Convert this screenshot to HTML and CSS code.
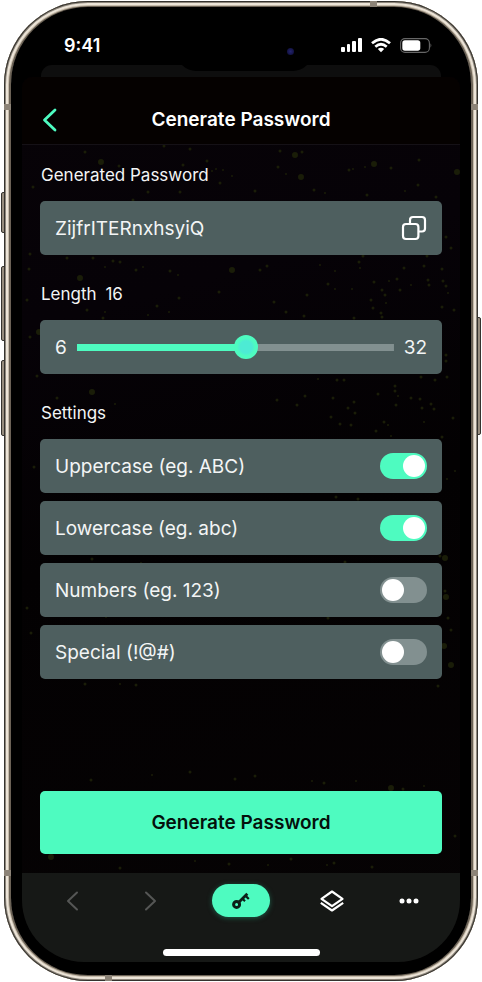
FILE: index.html
```html
<!DOCTYPE html>
<html lang="en">
<head>
<meta charset="utf-8">
<meta name="viewport" content="width=device-width, initial-scale=1">
<title>Generate Password</title>
<link rel="stylesheet" href="styles.css">
</head>
<body>
<div class="phone">
  <i class="key key-action"></i><i class="key key-up"></i><i class="key key-down"></i><i class="key key-power"></i>
  <i class="band band-tl"></i><i class="band band-tr"></i><i class="band band-bl"></i><i class="band band-br"></i><i class="band band-top"></i><i class="band band-bottom"></i>
  <div class="bezel">
    <div class="island"><i class="camera"></i></div>
    <div class="status">
      <span class="time">9:41</span>
      <span class="indicators">
        <svg width="21" height="15" viewBox="0 0 21 15" fill="#fff"><rect x="0" y="9" width="4" height="5" rx="1"/><rect x="6" y="6" width="3" height="8" rx="1"/><rect x="11" y="3" width="4" height="11" rx="1"/><rect x="17" y="0" width="4" height="14" rx="1"/></svg>
        <svg width="20" height="15" viewBox="0 0 20 15" fill="none" stroke="#fff" stroke-width="2.7"><path d="M1 5.3Q10-2.8 19 5.3M4.3 8.7Q10 3.8 15.7 8.7"/><path d="M6.8 11Q10 8.5 13.2 11L10 14.3Z" fill="#fff" stroke="none"/></svg>
        <svg width="32" height="15" viewBox="0 0 32 15"><rect x=".6" y=".6" width="28.8" height="13.8" rx="4.4" fill="none" stroke="#666" stroke-width="1.1"/><rect x="2.3" y="2.3" width="18" height="10.4" rx="2.6" fill="#fff"/><path d="M30.5 5.3q1.6 2.2 0 4.4z" fill="#666"/></svg>
      </span>
    </div>
    <div class="sheet-behind"></div>
    <div class="screen">
      <svg class="specks" width="438" height="885" viewBox="22 77 438 885" fill="none" stroke="#1a1d08" stroke-linecap="round" aria-hidden="true">
        <path stroke-width="6" d="M101 162h0M80 278h0M232 270h0M295 155h0M301 177h0M374 164h0M457 172h0M39 332h0M92 392h0M445 558h0M446 597h0M444 646h0M451 665h0M51 857h0M391 788h0"/>
        <path stroke-width="3" d="M164 146h0M190 149h0M85 152h0M33 187h0M148 192h0M180 192h0M133 200h0M183 165h0M119 166h0M207 161h0M220 183h0M30 254h0M67 258h0M93 258h0M113 261h0M120 262h0M29 269h0M136 270h0M170 271h0M219 292h0M179 298h0M157 306h0M27 300h0M87 310h0M103 318h0M30 337h0M37 376h0M57 398h0M34 467h0M27 608h0M92 559h0M31 633h0M85 684h0M136 685h0M91 780h0M190 772h0M235 779h0M120 868h0M229 864h0M280 151h0M302 152h0M278 167h0M349 170h0M391 168h0M419 160h0M314 190h0M255 191h0M418 185h0M367 195h0M436 197h0M446 237h0M451 248h0M359 262h0M363 256h0M427 256h0M267 266h0M260 270h0M404 268h0M424 266h0M442 269h0M328 284h0M307 295h0M374 282h0M397 279h0M428 280h0M429 285h0M443 281h0M446 286h0M400 290h0M382 290h0M385 295h0M371 300h0M274 302h0M286 312h0M304 316h0M373 308h0M381 313h0M382 317h0M442 307h0M454 310h0M354 318h0M446 355h0M446 361h0M421 377h0M435 380h0M447 377h0M337 380h0M344 380h0M395 386h0M395 391h0M277 400h0M297 405h0M305 396h0M333 398h0M354 402h0M348 408h0M378 394h0M396 405h0M411 398h0M420 399h0M431 404h0M434 409h0M422 408h0M331 417h0M340 424h0M355 413h0M351 425h0M384 422h0M376 431h0M453 418h0M442 437h0M336 497h0M358 499h0M345 562h0M440 556h0M445 591h0M448 618h0M451 630h0M328 618h0M438 686h0M255 776h0M324 783h0M403 789h0M455 836h0M291 859h0M334 863h0M372 867h0"/>
        <path stroke-width="2" d="M212 171h0M216 169h0M223 170h0M232 176h0M105 267h0M143 267h0M178 275h0M105 312h0M148 315h0M169 312h0M115 404h0M141 563h0M106 617h0M191 580h0M120 684h0M152 775h0M195 861h0M365 167h0M286 174h0M325 193h0M353 169h0M405 191h0M335 271h0M320 265h0M360 268h0M389 281h0M411 285h0M352 289h0M335 289h0M448 293h0M386 303h0M318 379h0M398 396h0M388 425h0M391 436h0M424 422h0M447 479h0M455 471h0M432 579h0M312 781h0M356 781h0M424 786h0M268 865h0M327 865h0"/>
      </svg>
      <header class="topbar">
        <button class="back" type="button" aria-label="Back"><svg width="16" height="26" viewBox="0 0 16 26" fill="none" stroke="#4efbc0" stroke-width="2.8" stroke-linecap="round" stroke-linejoin="round"><path d="M14 3 3.500 13 14 23"/></svg></button>
        <h1>Cenerate Password</h1>
      </header>
      <main>
        <section>
          <h2>Generated Password</h2>
          <div class="card"><output>ZijfrITERnxhsyiQ</output>
            <button class="copy" type="button" aria-label="Copy"><svg width="26" height="26" viewBox="0 0 26 26" fill="none" stroke="#fff" stroke-width="2.2"><rect x="2" y="9" width="15.4" height="15" rx="3"/><path d="M9 9V5q0-3 3-3h9q3 0 3 3v8.500q0 3-3 3h-3.600"/></svg></button>
          </div>
        </section>
        <section>
          <h2><label for="length">Length</label> <span class="amount">16</span></h2>
          <div class="card range"><span>6</span><input id="length" type="range" min="6" max="32" value="20"><span>32</span></div>
        </section>
        <section>
          <h2>Settings</h2>
          <div class="options">
            <label class="card">Uppercase (eg. ABC)<input type="checkbox" checked></label>
            <label class="card">Lowercase (eg. abc)<input type="checkbox" checked></label>
            <label class="card">Numbers (eg. 123)<input type="checkbox"></label>
            <label class="card">Special (!@#)<input type="checkbox"></label>
          </div>
        </section>
        <button class="generate" type="button">Generate Password</button>
      </main>
      <nav>
        <div class="tabs">
          <button type="button" aria-label="Previous" disabled><svg width="30" height="24" viewBox="0 0 30 24" fill="none" stroke="#555655" stroke-width="2" stroke-linecap="round" stroke-linejoin="round"><path d="M19 3.500l-9 8.500 9 8.500"/></svg></button>
          <button type="button" aria-label="Next" disabled><svg width="30" height="24" viewBox="0 0 30 24" fill="none" stroke="#555655" stroke-width="2" stroke-linecap="round" stroke-linejoin="round"><path d="M11 3.500l9 8.500-9 8.500"/></svg></button>
          <button class="current" type="button" aria-label="Passwords"><svg width="20" height="20" viewBox="0 0 20 20" fill="none" stroke="#0c2019"><circle cx="5.600" cy="13.400" r="3" stroke-width="3"/><path d="M7.800 11.300 16.300 2.800" stroke-width="2.800"/><path d="M11.600 7.800l2.400 2.400M14.400 4.600l3.400 3.400" stroke-width="2.200"/></svg></button>
          <button type="button" aria-label="Layers"><svg width="26" height="24" viewBox="0 0 26 24" fill="none" stroke="#fff" stroke-width="2.200" stroke-linejoin="round"><path d="M13 2.500 23.500 9.800 13 17.200 2.500 9.800Z"/><path d="M1.800 13.800 13 21.500 24.200 13.800"/></svg></button>
          <button type="button" aria-label="More"><svg width="20" height="6" viewBox="0 0 20 6" fill="#fff"><circle cx="3" cy="3" r="2.500"/><circle cx="10" cy="3" r="2.500"/><circle cx="17" cy="3" r="2.500"/></svg></button>
        </div>
        <div class="home"></div>
      </nav>
    </div>
  </div>
</div>
</body>
</html>
```
FILE: styles.css
```css
* { box-sizing: border-box; }
html { background: #fff; }
body {
  margin: 0;
  padding: 1px 4px;
  min-height: 100vh;
  display: flex;
  font-family: Inter, "Liberation Sans", sans-serif;
  color: #f3f5f5;
}
button { padding: 0; border: 0; background: none; font: inherit; display: flex; align-items: center; justify-content: center; }
svg { display: block; }
h1, h2 { margin: 0; }

.phone {
  position: relative;
  flex: 1;
  display: flex;
  padding: 6px 7px;
  border-radius: 84px;
  background: #b9afa1;
  box-shadow: inset 0 0 0 1px #35332f, inset 0 0 0 2px #8d867b, inset 0 0 0 4px #ece4d8, inset 0 0 0 5px #c5baa9, inset 0 0 0 7px #6b6256;
}
.bezel {
  position: relative;
  flex: 1;
  display: flex;
  flex-direction: column;
  padding: 0 11px 13px;
  border-radius: 77px;
  background: #000;
}
.key { position: absolute; z-index: -1; width: 5px; background: #978d7f; border: 1px solid #35332f; border-radius: 2px; }
.key-action { left: -3px; top: 191px; height: 41px; }
.key-up { left: -3px; top: 265px; height: 75px; }
.key-down { left: -3px; top: 359px; height: 76px; }
.key-power { right: -3px; top: 316px; height: 118px; }
.band { position: absolute; width: 7px; height: 6px; background: #8c8377; }
.band-tl { left: 0; top: 103px; }
.band-tr { right: 0; top: 103px; }
.band-bl { left: 0; bottom: 105px; }
.band-br { right: 0; bottom: 105px; }
.band-top { right: 101px; top: 0; }
.band-bottom { left: 101px; bottom: 0; }

.island { position: absolute; z-index: 1; left: 166px; right: 159px; top: 26px; height: 38px; border-radius: 19px; background: #000; }
.camera { position: absolute; right: 18px; top: 15px; width: 7px; height: 7px; border-radius: 50%; background: radial-gradient(#24246e, #0b0b30); }

.status { height: 58px; padding: 18px 28px 0 42px; display: flex; align-items: center; justify-content: space-between; }
.time { font-size: 18px; font-weight: 600; color: #fff; }
.indicators { display: flex; gap: 9px; align-items: center; }
.sheet-behind { height: 12px; margin: 0 19px; border-radius: 11px 11px 0 0; background: #0e0e0e; }

.screen {
  position: relative;
  flex: 1;
  display: flex;
  flex-direction: column;
  overflow: hidden;
  border-radius: 10px 10px 62px 62px;
  background: linear-gradient(165deg, #070307, #060207 25%, #030102 50%, #060304);
}
.specks { position: absolute; left: 0; top: 0; }
.topbar { position: relative; height: 68px; padding: 18px 19px 0; display: grid; grid-template-columns: 16px 1fr 16px; align-items: center; background: #050100; border-bottom: 1px solid #151116; }
h1 { text-align: center; font-size: 19px; font-weight: 600; color: #fff; }

main { position: relative; flex: 1; display: flex; flex-direction: column; gap: 27px; padding: 18px 18px 19px; }
h2 { margin-bottom: 14px; padding-left: 1px; font-size: 17px; line-height: 24px; font-weight: 400; }
.amount { margin-left: 4px; }
.card { height: 54px; padding: 0 15px; display: flex; align-items: center; justify-content: space-between; border-radius: 5px; background: #4e5f5f; font-size: 19px; }
.options { display: grid; gap: 8px; }
.range { gap: 10px; }

input { appearance: none; margin: 0; }
input[type="range"] {
  flex: 1;
  min-width: 0;
  height: 24px;
  background: linear-gradient(90deg, #4efbc0 54%, #829090 54%) center / 100% 7px no-repeat;
}
input[type="range"]::-webkit-slider-thumb { appearance: none; width: 24px; height: 24px; border-radius: 50%; background: radial-gradient(#4debd4 0 6px, #4efbc0 9px); }
input[type="checkbox"] { width: 47px; height: 26px; padding: 2px; display: flex; border-radius: 13px; background: #829090; }
input[type="checkbox"]::before { content: ""; width: 22px; height: 22px; border-radius: 50%; background: #fff; }
input[type="checkbox"]:checked { justify-content: flex-end; background: #4efbc0; }

.generate { height: 63px; margin-top: auto; border-radius: 5px; background: #4efbc0; color: #04110c; font-size: 19px; font-weight: 600; }

nav { position: relative; padding: 11px 36px 6px; background: #161816; }
.tabs { display: flex; justify-content: space-between; }
.tabs button { width: 30px; height: 33px; }
.tabs .current { width: 58px; border-radius: 17px; background: #4efbc0; box-shadow: 0 1px 5px #1e5c48; }
.home { width: 157px; height: 7px; margin: 32px auto 0; border-radius: 4px; background: #fff; }
```
